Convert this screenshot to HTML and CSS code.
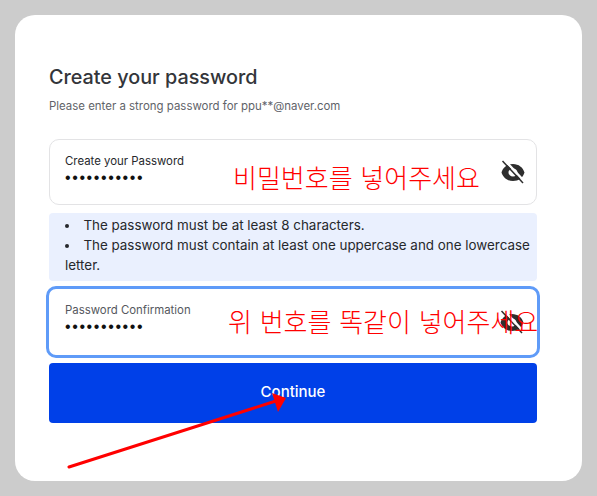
FILE: index.html
```html
<!DOCTYPE html>
<html>

<head>
	<meta charset="utf-8">
	<title>Create your password</title>
	<link rel="stylesheet" href="styles.css">
</head>

<body>
	<div class="card">
		<h3 class="title">Create your password</h3>
		<p class="subtitle">Please enter a strong password for ppu**@naver.com</p>

		<div class="field">
			<div class="fieldText">
				<label class="fieldLabel">Create your Password</label>
				<div class="dots">•••••••••••</div>
			</div>
			<svg class="eye" viewBox="0 0 24 24">
				<path class="eyeBody" fill-rule="evenodd" d="M12 4C6.300 4 2 7.500.5 12.500 2 17.500 6.300 21 12 21s10-3.500 11.500-8.500C22 7.500 17.700 4 12 4zm0 12.500c-2.500 0-4.500-1.800-4.500-4s2-4 4.500-4 4.500 1.800 4.500 4-2 4-4.500 4z" />
				<path class="eyeGap" d="M3.500 0l19.500 21" />
				<path class="eyeSlash" d="M1.500 1l20.500 22" />
			</svg>
		</div>

		<ul class="rules">
			<li>The password must be at least 8 characters.</li>
			<li>The password must contain at least one uppercase and one lowercase letter.</li>
		</ul>

		<div class="field focused">
			<div class="fieldText">
				<label class="fieldLabel">Password Confirmation</label>
				<div class="dots">•••••••••••</div>
			</div>
			<svg class="eye" viewBox="0 0 24 24">
				<path class="eyeBody" fill-rule="evenodd" d="M12 4C6.300 4 2 7.500.5 12.500 2 17.500 6.300 21 12 21s10-3.500 11.500-8.500C22 7.500 17.700 4 12 4zm0 12.500c-2.500 0-4.500-1.800-4.500-4s2-4 4.500-4 4.500 1.800 4.500 4-2 4-4.500 4z" />
				<path class="eyeGap" d="M3.500 0l19.500 21" />
				<path class="eyeSlash" d="M1.500 1l20.500 22" />
			</svg>
		</div>

		<div class="button">Continue</div>
	</div>

	<!-- red notes drawn on top of the screenshot -->
	<div class="note noteOne">비밀번호를 넣어주세요</div>
	<div class="note noteTwo">위 번호를 똑같이 넣어주세요</div>
	<svg class="arrow" viewBox="0 0 597 496">
		<path d="M69 467L279 400" />
		<polygon points="286,398 272,393 278,412" />
	</svg>
</body>

</html>
```

FILE: styles.css
```css
html,
body {
	margin: 0;
	height: 100%;
}

body {
	position: relative;
	overflow: hidden;
	padding: 15px;
	box-sizing: border-box;

	background-color: #cccccc;

	font-family: "Inter", "Liberation Sans", sans-serif;
	color: #1f2024;
}

.card {
	width: 567px;
	height: 466px;
	padding: 49px 45px 0 34px;
	box-sizing: border-box;

	border-radius: 20px;
	background-color: white;
}

.title {
	margin: 0;

	font-size: 19.800px;
	font-weight: 500;
	line-height: 26px;
	color: #33353a;
}

.subtitle {
	margin: 8px 0 25px;

	font-size: 11.450px;
	line-height: 16px;
	color: #5f6369;
}

.field {
	display: flex;
	align-items: center;
	justify-content: space-between;
	height: 66px;
	padding: 0 11px 0 15px;
	box-sizing: border-box;

	border: solid 1px #e3e3e5;
	border-radius: 10px;
	background-color: white;
}

.focused {
	height: 72px;
	margin: 5px -3px;
	padding: 0 13px 0 16px;

	border: solid 3px #5f9bf8;
}

.fieldText {
	padding-bottom: 6px;
}

.focused .fieldText {
	padding-bottom: 7px;
}

.fieldLabel {
	display: block;

	font-size: 11.400px;
	line-height: 16px;
	color: #26282c;
}

.focused .fieldLabel {
	color: #55585e;
}

.dots {
	margin-top: 1px;

	font-family: "Liberation Sans", sans-serif;
	font-size: 16px;
	letter-spacing: 1.600px;
	line-height: 16px;
	color: #111111;
}

.eye {
	width: 24px;
	height: 24px;
}

.eyeBody {
	fill: #2e2e2e;
}

.eyeGap {
	fill: none;
	stroke: white;
	stroke-width: 2.500px;
}

.eyeSlash {
	fill: none;
	stroke: #2e2e2e;
	stroke-width: 1.500px;
}

.rules {
	height: 68px;
	margin: 8px 0 0;
	padding: 2px 3px 0 16px;
	box-sizing: border-box;

	border-radius: 4px;
	background-color: #eaf0fe;

	font-size: 13.400px;
	line-height: 20px;
	color: #26282c;
}

.rules li {
	list-style-position: inside;
}

.button {
	height: 60px;

	border-radius: 4px;
	background-color: #0040e8;

	font-size: 15px;
	font-weight: 500;
	line-height: 57px;
	color: white;
	text-align: center;
}

.note {
	position: absolute;

	font-family: "Noto Sans CJK KR", sans-serif;
	font-size: 26px;
	font-weight: 300;
	line-height: 30px;
	word-spacing: 2px;
	white-space: nowrap;
	color: #ff0000;
}

.noteOne {
	left: 233px;
	top: 162px;
}

.noteTwo {
	left: 228px;
	top: 306px;
}

.arrow {
	position: absolute;
	left: 0;
	top: 0;
	width: 597px;
	height: 496px;
}

.arrow path {
	fill: none;
	stroke: #ff0000;
	stroke-width: 3px;
	stroke-linecap: round;
}

.arrow polygon {
	fill: #ff0000;
}
```
